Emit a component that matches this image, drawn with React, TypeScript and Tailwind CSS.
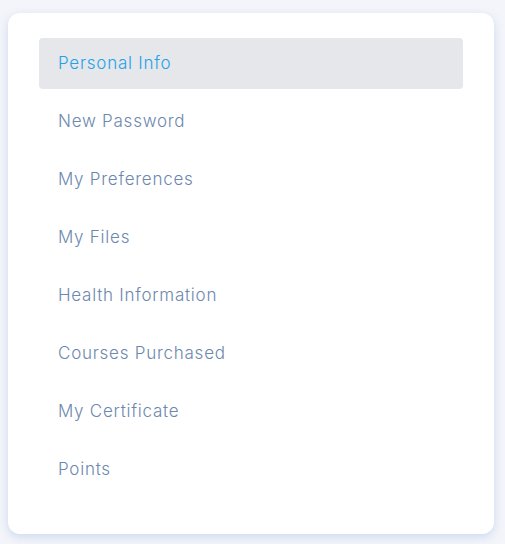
const MENU = [
  'Personal Info',
  'New Password',
  'My Preferences',
  'My Files',
  'Health Information',
  'Courses Purchased',
  'My Certificate',
  'Points',
];

export default function App() {
  return (
    <div className="min-h-screen bg-[#f3f5fa] px-[8px] pt-[13px] pb-[10px] font-['Inter',sans-serif]">
      <div className="w-[486px] rounded-[12px] bg-white px-[31px] pt-[25px] pb-[39px] shadow-[0_3px_10px_rgba(160,185,225,0.45)]">
        <ul className="flex flex-col gap-[7px]">
          {MENU.map((item, i) => (
            <li
              key={item}
              className={`flex h-[51px] items-center rounded-[4px] px-[19px] text-[17px] font-light tracking-[0.75px] ${
                i === 0 ? 'bg-[#e5e7eb] text-[#1fa2e8]' : 'text-[#6c88ae]'
              }`}
            >
              {item}
            </li>
          ))}
        </ul>
      </div>
    </div>
  );
}
